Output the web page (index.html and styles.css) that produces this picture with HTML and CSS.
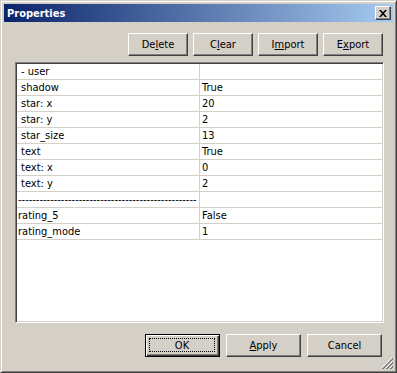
FILE: index.html
```html
<!DOCTYPE html>
<html lang="en">
<head>
    <meta charset="UTF-8">
    <title>Properties</title>
    <link rel="stylesheet" href="styles.css">
</head>
<body>
    <div class="window">
        <div class="titlebar">
            <span class="title">Properties</span>
            <button class="close-btn" aria-label="Close">
                <svg width="8" height="7" viewBox="0 0 8 7">
                    <path d="M0 0h2l2 2.3L6 0h2L5 3.5 8 7H6L4 4.7 2 7H0l3-3.5z" fill="#000"/>
                </svg>
            </button>
        </div>

        <div class="content">
            <div class="toolbar">
                <button class="btn">De<u>l</u>ete</button>
                <button class="btn">C<u>l</u>ear</button>
                <button class="btn">I<u>m</u>port</button>
                <button class="btn">E<u>x</u>port</button>
            </div>

            <div class="list">
                <div class="row"><div class="key indent">- user</div><div class="val"></div></div>
                <div class="row"><div class="key indent">shadow</div><div class="val">True</div></div>
                <div class="row"><div class="key indent">star: x</div><div class="val">20</div></div>
                <div class="row"><div class="key indent">star: y</div><div class="val">2</div></div>
                <div class="row"><div class="key indent">star_size</div><div class="val">13</div></div>
                <div class="row"><div class="key indent">text</div><div class="val">True</div></div>
                <div class="row"><div class="key indent">text: x</div><div class="val">0</div></div>
                <div class="row"><div class="key indent">text: y</div><div class="val">2</div></div>
                <div class="row"><div class="key">--------------------------------------------------</div><div class="val"></div></div>
                <div class="row"><div class="key">rating_5</div><div class="val">False</div></div>
                <div class="row"><div class="key">rating_mode</div><div class="val">1</div></div>
            </div>

            <div class="actions">
                <button class="btn wide btn-default"><span class="focus">OK</span></button>
                <button class="btn wide"><u>A</u>pply</button>
                <button class="btn wide">Cancel</button>
            </div>
        </div>

        <!-- size grip in the corner -->
        <svg class="grip" width="12" height="12" viewBox="0 0 12 12">
            <path d="M11 1L1 11M11 5L5 11M11 9L9 11" stroke="#fff" stroke-width="1"/>
            <path d="M12 1L1 12M12 2L2 12M12 5L5 12M12 6L6 12M12 9L9 12M12 10L10 12" stroke="#808080" stroke-width="1"/>
        </svg>
    </div>
</body>
</html>
```

FILE: styles.css
```css
/* General */
body {
    margin: 0;
    background-color: #d4d0c8;
    font-family: "DejaVu Sans Condensed", "DejaVu Sans", sans-serif;
    font-size: 11px;
    color: #000;
}

.window {
    position: relative;
    width: 397px;
    height: 373px;
    box-sizing: border-box;
    border: 1px solid;
    border-color: #d4d0c8 #404040 #404040 #d4d0c8;
    box-shadow: inset 1px 1px #fff, inset -1px -1px #808080;
    padding: 3px;
    display: flex;
    flex-direction: column;
    background-color: #d4d0c8;
}

/* Title bar */
.titlebar {
    height: 18px;
    flex-shrink: 0;
    display: flex;
    align-items: center;
    justify-content: space-between;
    padding: 0 2px;
    background: linear-gradient(to right, #0a246a, #a6caf0);
    color: #fff;
    font-weight: bold;
}

.title {
    padding-left: 1px;
}

.close-btn {
    width: 16px;
    height: 14px;
    padding: 0;
    display: flex;
    align-items: center;
    justify-content: center;
    background-color: #d4d0c8;
    border: 1px solid;
    border-color: #fff #404040 #404040 #fff;
    box-shadow: inset -1px -1px #808080;
    box-sizing: border-box;
}

/* Content */
.content {
    flex: 1;
    display: flex;
    flex-direction: column;
    padding: 11px 9px 12px 11px;
}

.toolbar, .actions {
    display: flex;
    justify-content: flex-end;
    padding-right: 1px;
}

.toolbar {
    gap: 5px;
}

.actions {
    gap: 6px;
    margin-top: 11px;
    padding-right: 2px;
}

.btn {
    width: 60px;
    height: 23px;
    padding: 0;
    box-sizing: border-box;
    background-color: #d4d0c8;
    border: 1px solid;
    border-color: #fff #404040 #404040 #fff;
    box-shadow: inset -1px -1px #808080;
    font-family: inherit;
    font-size: 11px;
    color: #000;
}

.btn.wide {
    width: 75px;
}

.btn-default {
    border: 1px solid #000;
    box-shadow: inset 1px 1px #fff, inset -1px -1px #404040, inset -2px -2px #808080;
    padding: 3px 4px 4px 3px;
}

.btn-default .focus {
    display: flex;
    align-items: center;
    justify-content: center;
    height: 100%;
    box-sizing: border-box;
    border: 1px dotted #000;
}

/* Property list */
.list {
    margin-top: 6px;
    flex: 1;
    background-color: #fff;
    border: 1px solid;
    border-color: #808080 #fff #fff #808080;
    box-shadow: inset 1px 1px #404040, inset -1px -1px #d4d0c8;
    padding: 1px;
    overflow: hidden;
}

.row {
    display: grid;
    grid-template-columns: 183px 1fr;
    height: 16px;
    box-sizing: border-box;
    border-bottom: 1px solid #d4d0c8;
    line-height: 15px;
}

.key, .val {
    white-space: nowrap;
    overflow: hidden;
}

.key {
    border-right: 1px solid #d4d0c8;
    padding-left: 1px;
}

.key.indent {
    padding-left: 4px;
}

.val {
    padding-left: 2px;
}

/* Size grip */
.grip {
    position: absolute;
    right: 3px;
    bottom: 3px;
}
```
